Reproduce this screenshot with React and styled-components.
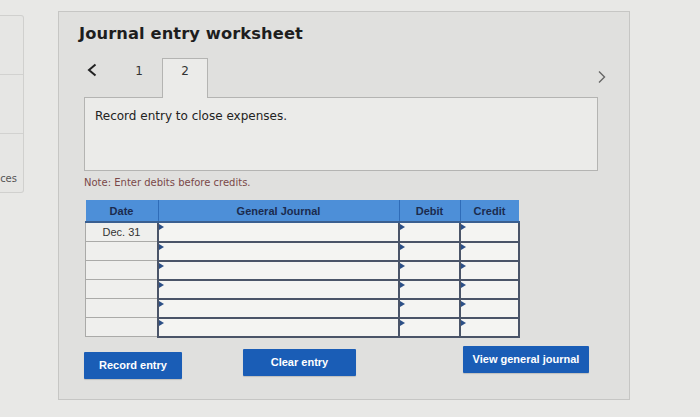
import styled, { createGlobalStyle } from "styled-components";

const GlobalStyle = createGlobalStyle`
  html, body {
    margin: 0;
    padding: 0;
    background: #e8e8e6;
  }
  body {
    font-family: "DejaVu Sans", Verdana, sans-serif;
    width: 700px;
    height: 417px;
    overflow: hidden;
  }
`;

const rows = ["Dec. 31", "", "", "", "", ""];

export default function App() {
  return (
    <>
      <GlobalStyle />
      <Page>
        <Sidebar>
          <SideItem />
          <SideItem />
          <SideItem>
            <SideLabel>ces</SideLabel>
          </SideItem>
        </Sidebar>
        <Panel>
          <Title>Journal entry worksheet</Title>
          <TabRow>
            <PrevArrow width="10" height="14" viewBox="0 0 10 14">
              <path d="M8.5 1.5 L2 7 L8.5 12.5" fill="none" stroke="#222" strokeWidth="2" />
            </PrevArrow>
            <Tab>1</Tab>
            <Tab active>2</Tab>
            <Spacer />
            <NextArrow width="8" height="14" viewBox="0 0 8 14">
              <path d="M1 1.5 L6.5 7 L1 12.5" fill="none" stroke="#666" strokeWidth="1.4" />
            </NextArrow>
          </TabRow>
          <Instruction>Record entry to close expenses.</Instruction>
          <Note>Note: Enter debits before credits.</Note>
          <Table>
            <thead>
              <tr>
                <Th width="72px">Date</Th>
                <Th width="240px">General Journal</Th>
                <Th width="60px">Debit</Th>
                <Th width="58px">Credit</Th>
              </tr>
            </thead>
            <tbody>
              {rows.map((d, i) => (
                <tr key={i}>
                  <DateCell>{d}</DateCell>
                  <InputCell />
                  <InputCell />
                  <InputCell />
                </tr>
              ))}
            </tbody>
          </Table>
          <Buttons>
            <Button w="98px" offset="3px">Record entry</Button>
            <Button w="113px" offset="0px" ml="61px">Clear entry</Button>
            <Button w="126px" offset="-3px" ml="107px">View general journal</Button>
          </Buttons>
        </Panel>
      </Page>
    </>
  );
}

const Page = styled.div`
  display: flex;
  align-items: flex-start;
  width: 700px;
  height: 417px;
`;

const Sidebar = styled.div`
  width: 23px;
  margin-top: 15px;
  border: 1px solid #d0d0ce;
  border-left: none;
  border-radius: 0 3px 3px 0;
  background: #e6e6e4;
  display: flex;
  flex-direction: column;
`;

const SideItem = styled.div`
  position: relative;
  height: 58px;
  border-bottom: 1px solid #d2d2d0;
  &:last-child {
    border-bottom: none;
  }
`;

const SideLabel = styled.span`
  position: absolute;
  right: 6px;
  bottom: 8px;
  font-size: 10px;
  color: #555;
`;

const Panel = styled.div`
  margin-left: 34px;
  margin-top: 11px;
  width: 572px;
  height: 389px;
  box-sizing: border-box;
  background: #e0e0de;
  border: 1px solid #c6c6c4;
  padding: 12px 0 0 25px;
`;

const Title = styled.h1`
  margin: 0 0 0 -5px;
  font-size: 16.3px;
  font-weight: bold;
  color: #1e1e1e;
  letter-spacing: 0.1px;
`;

const TabRow = styled.div`
  display: flex;
  align-items: flex-end;
  height: 41px;
  margin-top: 14px;
  width: 522px;
  margin-bottom: -1px;
`;

const PrevArrow = styled.svg`
  align-self: flex-start;
  margin: 6px 19px 0 3px;
`;

const NextArrow = styled.svg`
  align-self: flex-start;
  margin-top: 13px;
`;

const Tab = styled.div`
  width: 46px;
  height: 40px;
  display: flex;
  align-items: center;
  justify-content: center;
  box-sizing: border-box;
  padding-bottom: 15px;
  font-size: 12px;
  color: #333;
  background: ${(p) => (p.active ? "#ebebe9" : "transparent")};
  border: 1px solid ${(p) => (p.active ? "#b4b4b2" : "transparent")};
  border-bottom: none;
  position: relative;
  z-index: 1;
`;

const Spacer = styled.div`
  flex: 1;
`;

const Instruction = styled.div`
  width: 514px;
  height: 74px;
  box-sizing: border-box;
  background: #ebebe9;
  border: 1px solid #b4b4b2;
  padding: 11px 10px;
  font-size: 12px;
  color: #222;
`;

const Note = styled.div`
  margin-top: 6px;
  font-size: 10px;
  color: #7a4848;
`;

const Table = styled.table`
  margin-top: 12px;
  margin-left: 1px;
  border-collapse: collapse;
  font-family: "Liberation Sans", Arial, sans-serif;
`;

const Th = styled.th`
  width: ${(p) => p.width};
  height: 21px;
  padding: 0;
  background: #4d8fd8;
  color: #1b2b4e;
  font-size: 11px;
  font-weight: bold;
  border-right: 1px solid #2f6cb8;
  border-bottom: 2px solid #3a5f90;
  &:last-child {
    border-right: none;
  }
`;

const DateCell = styled.td`
  height: 18px;
  padding: 0;
  background: #efefed;
  border: 1px solid #aaaaa8;
  border-right: 2px solid #4a5468;
  text-align: center;
  font-size: 11px;
  color: #333;
`;

const InputCell = styled.td`
  position: relative;
  height: 17px;
  padding: 0;
  background: #f4f4f2;
  border: 2px solid #4a5468;
  &::before {
    content: "";
    position: absolute;
    left: 0;
    top: 1px;
    border-left: 5px solid #2c4f86;
    border-top: 3px solid transparent;
    border-bottom: 3px solid transparent;
  }
`;

const Buttons = styled.div`
  display: flex;
  align-items: flex-start;
  margin-top: 11px;
`;

const Button = styled.button`
  width: ${(p) => p.w};
  height: 27px;
  margin-left: ${(p) => p.ml || "0"};
  margin-top: ${(p) => p.offset};
  background: #1a5db6;
  border: none;
  border-radius: 1px;
  color: #ffffff;
  font-family: "Liberation Sans", Arial, sans-serif;
  font-weight: bold;
  font-size: 11px;
  box-shadow: 0 1px 1px rgba(0, 0, 0, 0.15);
`;
